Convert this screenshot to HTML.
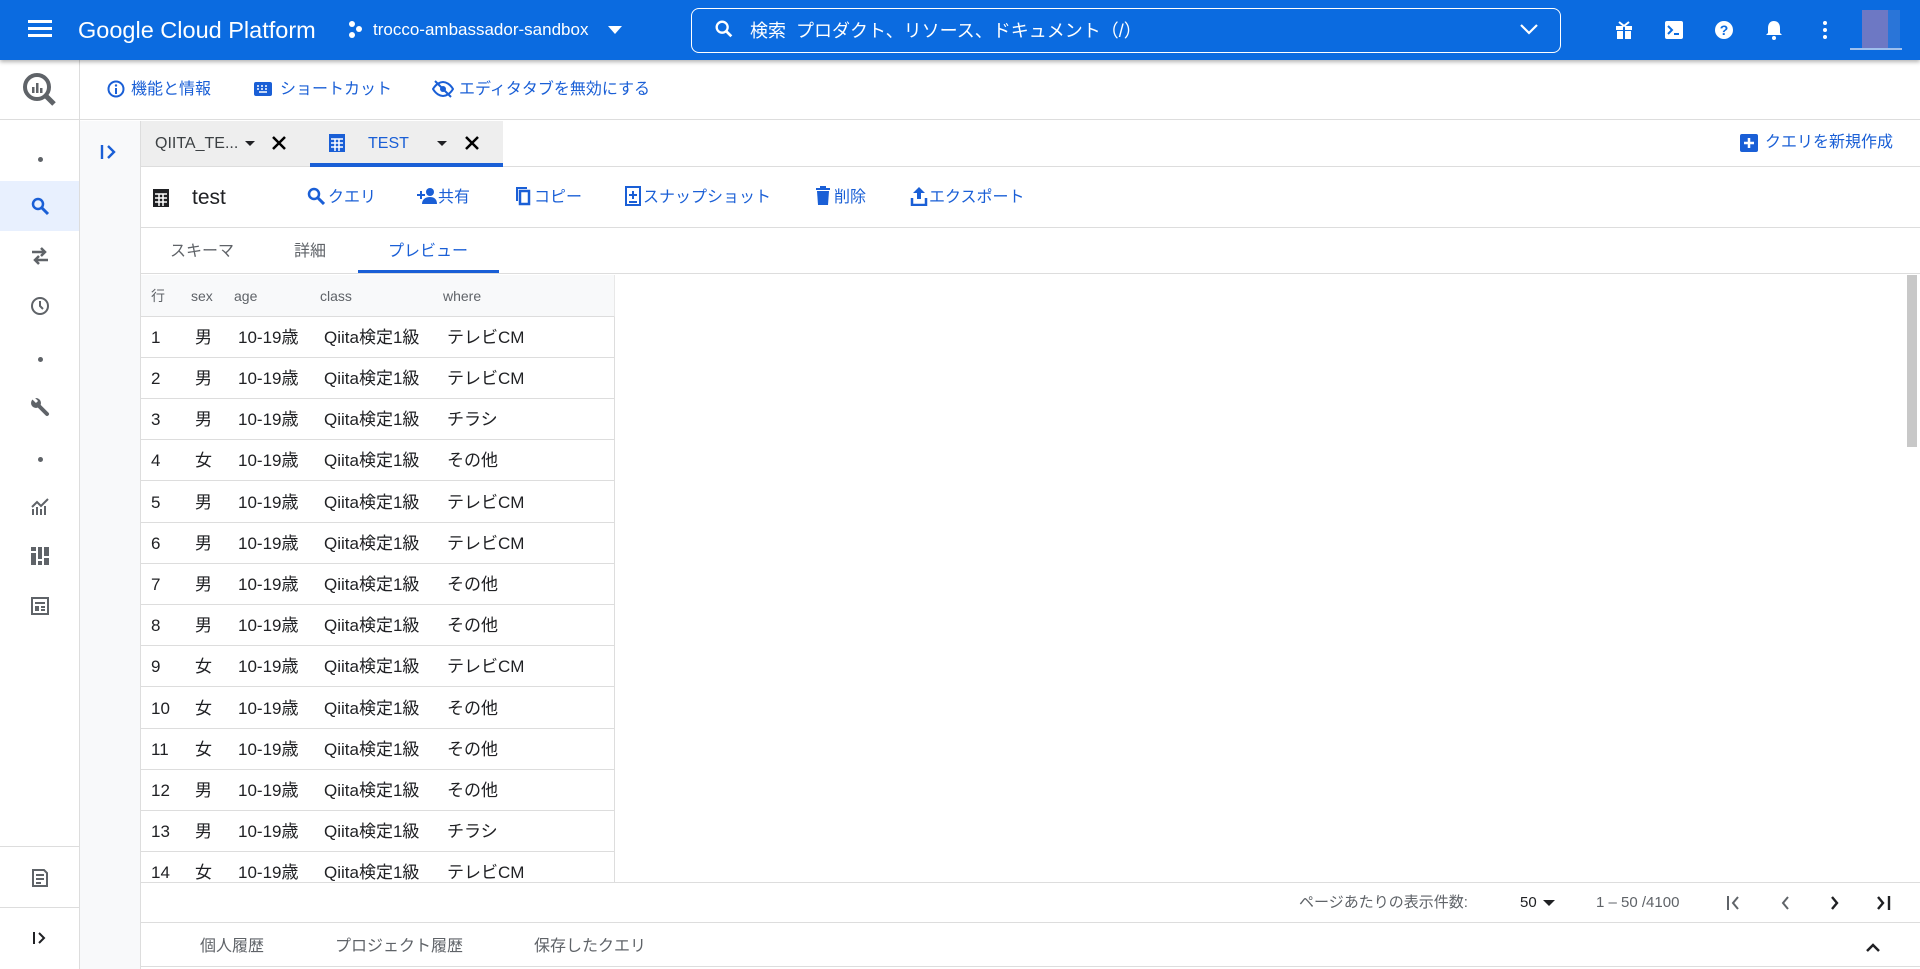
<!DOCTYPE html>
<html><head><meta charset="utf-8"><style>
*{box-sizing:border-box;margin:0;padding:0}
body{width:1920px;height:969px;overflow:hidden;font-family:"Liberation Sans","Noto Sans CJK JP",sans-serif;background:#fff;position:relative;color:#202124}
.abs{position:absolute}
.hdr{left:0;top:0;width:1920px;height:60px;background:#0b6be0;box-shadow:0 2px 4px rgba(0,0,0,.3);z-index:5;color:#fff}
.blue{color:#1a5fd6}
.sb{left:0;top:120px;width:80px;height:849px;border-right:1px solid #ddd;background:#fff}
.row{position:absolute;left:141px;width:474px;height:41px;border-bottom:1px solid #ddd;font-size:17px}
.row span{position:absolute;top:11px;line-height:20px;height:20px}
</style></head><body>
<div class="abs hdr">
  <div class="abs" style="left:28px;top:20px;width:24px;height:3px;background:#fff;box-shadow:0 7px 0 #fff,0 14px 0 #fff"></div>
  <div class="abs" style="left:78px;top:16px;font-size:23.5px;line-height:28px">Google Cloud Platform</div>
  <svg class="abs" style="left:347px;top:20px" width="16" height="20" viewBox="0 0 16 20"><circle cx="5" cy="4" r="3" fill="#fff"/><circle cx="12" cy="9" r="3" fill="#fff"/><circle cx="5" cy="15" r="3" fill="#fff"/></svg>
  <div class="abs" style="left:373px;top:20px;font-size:17px;line-height:20px">trocco-ambassador-sandbox</div>
  <div class="abs" style="left:608px;top:26px;border-left:7px solid transparent;border-right:7px solid transparent;border-top:8px solid #fff"></div>
  <div class="abs" style="left:691px;top:8px;width:870px;height:45px;border:1.5px solid #fff;border-radius:8px"></div>
  <svg class="abs" style="left:713px;top:18px" width="22" height="22" viewBox="0 0 24 24"><circle cx="10" cy="10" r="6" stroke="#fff" stroke-width="2.5" fill="none"/><path d="M14 14l6 6" stroke="#fff" stroke-width="3"/></svg>
  <div class="abs" style="left:750px;top:19px;font-size:18px;line-height:24px">検索&nbsp;&nbsp;プロダクト、リソース、ドキュメント（/）</div>
  <svg class="abs" style="left:1518px;top:21px" width="22" height="16" viewBox="0 0 22 16"><path d="M3 4l8 8 8-8" stroke="#fff" stroke-width="2.2" fill="none"/></svg>
  <svg class="abs" style="left:1614px;top:20px" width="20" height="20" viewBox="0 0 20 20"><rect x="2" y="6" width="16" height="4" fill="#fff"/><rect x="3" y="11" width="14" height="8" fill="#fff"/><rect x="9" y="6" width="2" height="13" fill="#0b6be0"/><path d="M5 2l5 4 5-4" stroke="#fff" stroke-width="2" fill="none"/></svg>
  <svg class="abs" style="left:1664px;top:20px" width="20" height="20" viewBox="0 0 20 20"><rect x="1" y="1" width="18" height="18" rx="2" fill="#fff"/><path d="M4 6l4 4-4 4" stroke="#0b6be0" stroke-width="2" fill="none"/><rect x="10" y="13" width="5" height="2" fill="#0b6be0"/></svg>
  <svg class="abs" style="left:1714px;top:20px" width="20" height="20" viewBox="0 0 20 20"><circle cx="10" cy="10" r="9" fill="#fff"/><text x="10" y="15" font-size="14" font-weight="bold" text-anchor="middle" fill="#0b6be0" font-family="Liberation Sans">?</text></svg>
  <svg class="abs" style="left:1764px;top:19px" width="20" height="22" viewBox="0 0 20 22"><path d="M10 2c-4 0-6 3-6 7v5l-2 2h16l-2-2V9c0-4-2-7-6-7z" fill="#fff"/><circle cx="10" cy="19" r="2" fill="#fff"/></svg>
  <div class="abs" style="left:1823px;top:21px;width:4px;height:4px;border-radius:2px;background:#fff;box-shadow:0 7px 0 #fff,0 14px 0 #fff"></div>
  <div class="abs" style="left:1862px;top:10px;width:26px;height:38px;background:#6d78c4"></div>
  <div class="abs" style="left:1888px;top:10px;width:12px;height:38px;background:#2a75d8"></div>
  <div class="abs" style="left:1850px;top:48px;width:52px;height:2px;background:#9fc0ee"></div>
</div>
<div class="abs" style="left:0;top:60px;width:1920px;height:60px;border-bottom:1px solid #ddd"></div>
<div class="abs" style="left:0;top:60px;width:80px;height:60px;border-right:1px solid #ddd"></div>
<svg class="abs" style="left:21px;top:71px" width="38" height="38" viewBox="0 0 38 38"><circle cx="16" cy="16" r="12" stroke="#5f6368" stroke-width="4" fill="none"/><path d="M24 24l9 9" stroke="#5f6368" stroke-width="5"/><rect x="11" y="16" width="2.5" height="6" fill="#5f6368"/><rect x="15" y="12" width="2.5" height="10" fill="#5f6368"/><rect x="19" y="17" width="2.5" height="5" fill="#5f6368"/></svg>
<svg class="abs" style="left:107px;top:80px" width="18" height="18" viewBox="0 0 18 18"><circle cx="9" cy="9" r="7.5" stroke="#1a5fd6" stroke-width="2" fill="none"/><rect x="8" y="8" width="2" height="6" fill="#1a5fd6"/><circle cx="9" cy="5.5" r="1.2" fill="#1a5fd6"/></svg>
<div class="abs blue" style="left:131px;top:79px;font-size:16px;line-height:22px">機能と情報</div>
<svg class="abs" style="left:254px;top:82px" width="18" height="14" viewBox="0 0 18 14"><rect x="0" y="0" width="18" height="14" rx="2" fill="#1a5fd6"/><path d="M3 4h2M7 4h2M11 4h2M3 7h2M7 7h2M11 7h2M5 10h8" stroke="#fff" stroke-width="1.5"/></svg>
<div class="abs blue" style="left:280px;top:79px;font-size:16px;line-height:22px">ショートカット</div>
<svg class="abs" style="left:432px;top:80px" width="22" height="18" viewBox="0 0 22 18"><path d="M1 9c3-5 7-7 10-7s7 2 10 7c-3 5-7 7-10 7S4 14 1 9z" stroke="#1a5fd6" stroke-width="2" fill="none"/><circle cx="11" cy="9" r="3" fill="#1a5fd6"/><path d="M3 1l16 16" stroke="#1a5fd6" stroke-width="2"/></svg>
<div class="abs blue" style="left:459px;top:79px;font-size:16px;line-height:22px">エディタタブを無効にする</div>
<div class="abs sb"></div>
<div class="abs" style="left:0;top:181px;width:79px;height:50px;background:#e8f0fe"></div>
<div class="abs" style="left:38px;top:157px;width:5px;height:5px;border-radius:3px;background:#5f6368"></div>
<svg class="abs" style="left:30px;top:196px" width="20" height="20" viewBox="0 0 20 20"><circle cx="8" cy="8" r="5" stroke="#1a5fd6" stroke-width="2.5" fill="none"/><path d="M12 12l6 6" stroke="#1a5fd6" stroke-width="3"/></svg>
<svg class="abs" style="left:30px;top:246px" width="20" height="20" viewBox="0 0 20 20"><path d="M2 6h13M11 2l4 4-4 4M18 14H5M9 10l-4 4 4 4" stroke="#5f6368" stroke-width="2.5" fill="none"/></svg>
<svg class="abs" style="left:30px;top:296px" width="20" height="20" viewBox="0 0 20 20"><circle cx="10" cy="10" r="8" stroke="#5f6368" stroke-width="2" fill="none"/><path d="M10 5v5l3 3" stroke="#5f6368" stroke-width="2" fill="none"/></svg>
<div class="abs" style="left:38px;top:357px;width:5px;height:5px;border-radius:3px;background:#5f6368"></div>
<svg class="abs" style="left:30px;top:397px" width="20" height="20" viewBox="0 0 20 20"><path d="M8 8l9 9" stroke="#5f6368" stroke-width="4" stroke-linecap="round"/><circle cx="6" cy="6" r="5" fill="#5f6368"/><path d="M3 1l4 4" stroke="#fff" stroke-width="3"/></svg>
<div class="abs" style="left:38px;top:457px;width:5px;height:5px;border-radius:3px;background:#5f6368"></div>
<svg class="abs" style="left:30px;top:497px" width="20" height="20" viewBox="0 0 20 20"><path d="M2 18V12h2v6zM6 18V10h2v8zM10 18V12h2v6zM14 18V9h2v9z" fill="#5f6368"/><path d="M2 10l5-5 4 4 7-7" stroke="#5f6368" stroke-width="2" fill="none"/></svg>
<svg class="abs" style="left:30px;top:546px" width="20" height="20" viewBox="0 0 20 20"><path d="M1 1h5v4H1zM1 7h5v12H1zM8 1h4v12H8zM8 15h4v4H8zM14 1h5v9h-5zM14 12h5v7h-5z" fill="#5f6368"/></svg>
<svg class="abs" style="left:30px;top:596px" width="20" height="20" viewBox="0 0 20 20"><rect x="2" y="2" width="16" height="16" stroke="#5f6368" stroke-width="2" fill="none"/><path d="M5 6h10v2H5zM5 10h4v5H5zM11 10h4v2h-4zM11 13h4v2h-4z" fill="#5f6368"/></svg>
<div class="abs" style="left:0;top:846px;width:79px;height:1px;background:#ddd"></div>
<div class="abs" style="left:0;top:907px;width:79px;height:1px;background:#ddd"></div>
<svg class="abs" style="left:30px;top:868px" width="20" height="20" viewBox="0 0 20 20"><path d="M3 2h11l3 3v13H3z" stroke="#5f6368" stroke-width="2" fill="none"/><path d="M6 7h8M6 11h8M6 15h5" stroke="#5f6368" stroke-width="2"/></svg>
<svg class="abs" style="left:32px;top:930px" width="16" height="16" viewBox="0 0 16 16"><path d="M2 2v12" stroke="#202124" stroke-width="2"/><path d="M7 3l5 5-5 5" stroke="#202124" stroke-width="2" fill="none"/></svg>
<div class="abs" style="left:80px;top:121px;width:61px;height:848px;background:#f8f9fa;border-right:1px solid #ddd"></div>
<svg class="abs" style="left:99px;top:143px" width="20" height="18" viewBox="0 0 20 18"><path d="M3 2v14" stroke="#1a5fd6" stroke-width="2.4"/><path d="M9 3l6 6-6 6" stroke="#1a5fd6" stroke-width="2.4" fill="none"/></svg>
<div class="abs" style="left:141px;top:121px;width:362px;height:46px;background:#eeeeee"></div>
<div class="abs" style="left:141px;top:166px;width:1779px;height:1px;background:#ddd"></div>
<div class="abs" style="left:310px;top:163px;width:193px;height:4px;background:#1a5fd6"></div>
<div class="abs" style="left:155px;top:134px;font-size:16px;line-height:20px;color:#3c4043">QIITA_TE...</div>
<div class="abs" style="left:245px;top:141px;border-left:5px solid transparent;border-right:5px solid transparent;border-top:5px solid #202124"></div>
<svg class="abs" style="left:271px;top:135px" width="16" height="16" viewBox="0 0 16 16"><path d="M2 2l12 12M14 2L2 14" stroke="#000" stroke-width="2.5"/></svg>
<svg class="abs" style="left:328px;top:133px" width="18" height="20" viewBox="0 0 18 20"><rect x="1" y="1" width="16" height="18" fill="#1a5fd6"/><path d="M3 6h12M3 10h12M3 14h12M7 6v12M11 6v12" stroke="#fff" stroke-width="1.5"/></svg>
<div class="abs blue" style="left:368px;top:134px;font-size:16px;line-height:20px">TEST</div>
<div class="abs" style="left:437px;top:141px;border-left:5px solid transparent;border-right:5px solid transparent;border-top:5px solid #202124"></div>
<svg class="abs" style="left:464px;top:135px" width="16" height="16" viewBox="0 0 16 16"><path d="M2 2l12 12M14 2L2 14" stroke="#000" stroke-width="2.5"/></svg>
<svg class="abs" style="left:1740px;top:134px" width="18" height="18" viewBox="0 0 18 18"><rect x="0" y="0" width="18" height="18" rx="2" fill="#1a5fd6"/><path d="M9 4v10M4 9h10" stroke="#fff" stroke-width="2.5"/></svg>
<div class="abs blue" style="left:1765px;top:132px;font-size:16px;line-height:22px">クエリを新規作成</div>
<svg class="abs" style="left:152px;top:188px" width="18" height="20" viewBox="0 0 18 20"><rect x="1" y="1" width="16" height="18" fill="#202124"/><path d="M3 6h12M3 10h12M3 14h12M7 6v12M11 6v12" stroke="#fff" stroke-width="1.5"/></svg>
<div class="abs" style="left:192px;top:186px;font-size:21px;line-height:24px">test</div>
<div class="abs" style="left:141px;top:227px;width:1779px;height:1px;background:#ddd"></div>
<svg class="abs" style="left:307px;top:187px" width="18" height="18" viewBox="0 0 18 18"><circle cx="7" cy="7" r="5" stroke="#1a5fd6" stroke-width="2.5" fill="none"/><path d="M11 11l6 6" stroke="#1a5fd6" stroke-width="3"/></svg>
<div class="abs blue" style="left:328px;top:187px;font-size:16px;line-height:22px">クエリ</div>
<svg class="abs" style="left:417px;top:187px" width="20" height="18" viewBox="0 0 20 18"><circle cx="13" cy="5" r="4" fill="#1a5fd6"/><path d="M5 17c0-5 4-7 8-7s7 2 7 7z" fill="#1a5fd6"/><path d="M4 4v8M0 8h8" stroke="#1a5fd6" stroke-width="2"/></svg>
<div class="abs blue" style="left:438px;top:187px;font-size:16px;line-height:22px">共有</div>
<svg class="abs" style="left:515px;top:186px" width="16" height="20" viewBox="0 0 16 20"><path d="M2 15V2h10" stroke="#1a5fd6" stroke-width="2" fill="none"/><rect x="5" y="5" width="9" height="13" stroke="#1a5fd6" stroke-width="2.5" fill="none"/></svg>
<div class="abs blue" style="left:534px;top:187px;font-size:16px;line-height:22px">コピー</div>
<svg class="abs" style="left:625px;top:186px" width="16" height="20" viewBox="0 0 16 20"><rect x="1" y="1" width="14" height="18" stroke="#1a5fd6" stroke-width="2" fill="none"/><path d="M8 5v8M4 9h8" stroke="#1a5fd6" stroke-width="2"/><path d="M4 16h8" stroke="#1a5fd6" stroke-width="2"/></svg>
<div class="abs blue" style="left:643px;top:187px;font-size:16px;line-height:22px">スナップショット</div>
<svg class="abs" style="left:815px;top:186px" width="16" height="20" viewBox="0 0 16 20"><rect x="1" y="2" width="14" height="2" fill="#1a5fd6"/><rect x="5" y="0" width="6" height="3" fill="#1a5fd6"/><path d="M2 5h12l-1 14H3z" fill="#1a5fd6"/></svg>
<div class="abs blue" style="left:834px;top:187px;font-size:16px;line-height:22px">削除</div>
<svg class="abs" style="left:910px;top:186px" width="18" height="20" viewBox="0 0 18 20"><path d="M9 1L3 7h4v6h4V7h4z" fill="#1a5fd6"/><path d="M2 12v7h14v-7" stroke="#1a5fd6" stroke-width="2.5" fill="none"/></svg>
<div class="abs blue" style="left:929px;top:187px;font-size:16px;line-height:22px">エクスポート</div>
<div class="abs" style="left:170px;top:241px;font-size:16px;line-height:22px;color:#5f6368">スキーマ</div>
<div class="abs" style="left:294px;top:241px;font-size:16px;line-height:22px;color:#5f6368">詳細</div>
<div class="abs blue" style="left:388px;top:241px;font-size:16px;line-height:22px">プレビュー</div>
<div class="abs" style="left:358px;top:270px;width:141px;height:3px;background:#1a5fd6"></div>
<div class="abs" style="left:141px;top:273px;width:1779px;height:1px;background:#ddd"></div>
<div class="abs" style="left:141px;top:275px;width:474px;height:42px;background:#f8f9fa;border-bottom:1px solid #ddd;border-right:1px solid #e8e8e8;font-size:14px;color:#5f6368">
<span class="abs" style="left:10px;top:12px;line-height:18px">行</span><span class="abs" style="left:50px;top:12px;line-height:18px">sex</span><span class="abs" style="left:93px;top:12px;line-height:18px">age</span><span class="abs" style="left:179px;top:12px;line-height:18px">class</span><span class="abs" style="left:302px;top:12px;line-height:18px">where</span></div>
<div class="abs" style="left:614px;top:317px;width:1px;height:565px;background:#ddd"></div>
<div class="abs" style="left:1907px;top:275px;width:10px;height:172px;background:#c8c8c8"></div>
<div class="abs" style="left:141px;top:882px;width:1779px;height:1px;background:#ddd;z-index:2"></div>
<div class="abs" style="left:141px;top:883px;width:1779px;height:40px;background:#fff;z-index:2;border-bottom:1px solid #ddd"></div>
<div class="abs" style="left:1299px;top:893px;font-size:15px;line-height:20px;color:#5f6368;z-index:3">ページあたりの表示件数:</div>
<div class="abs" style="left:1520px;top:893px;font-size:15px;line-height:20px;z-index:3">50</div>
<div class="abs" style="left:1543px;top:900px;border-left:6px solid transparent;border-right:6px solid transparent;border-top:6px solid #202124;z-index:3"></div>
<div class="abs" style="left:1596px;top:893px;font-size:15px;line-height:20px;color:#5f6368;z-index:3">1 – 50 /4100</div>
<svg class="abs" style="left:1725px;top:894px;z-index:3" width="18" height="18" viewBox="0 0 18 18"><path d="M3 2v14" stroke="#5f6368" stroke-width="2"/><path d="M13 3L8 9l5 6" stroke="#5f6368" stroke-width="2" fill="none"/></svg>
<svg class="abs" style="left:1776px;top:894px;z-index:3" width="18" height="18" viewBox="0 0 18 18"><path d="M12 3L7 9l5 6" stroke="#5f6368" stroke-width="2" fill="none"/></svg>
<svg class="abs" style="left:1826px;top:894px;z-index:3" width="18" height="18" viewBox="0 0 18 18"><path d="M6 3l5 6-5 6" stroke="#202124" stroke-width="2.4" fill="none"/></svg>
<svg class="abs" style="left:1875px;top:894px;z-index:3" width="18" height="18" viewBox="0 0 18 18"><path d="M3 3l5 6-5 6" stroke="#202124" stroke-width="2.4" fill="none"/><path d="M14 2v14" stroke="#202124" stroke-width="2.4"/></svg>
<div class="abs" style="left:200px;top:936px;font-size:16px;line-height:22px;color:#5f6368">個人履歴</div>
<div class="abs" style="left:335px;top:936px;font-size:16px;line-height:22px;color:#5f6368">プロジェクト履歴</div>
<div class="abs" style="left:534px;top:936px;font-size:16px;line-height:22px;color:#5f6368">保存したクエリ</div>
<svg class="abs" style="left:1865px;top:941px" width="16" height="12" viewBox="0 0 16 12"><path d="M2 10l6-6 6 6" stroke="#202124" stroke-width="2.5" fill="none"/></svg>
<div class="abs" style="left:141px;top:966px;width:1779px;height:1px;background:#ddd"></div>
<div class="row" style="top:317px"><span style="left:10px">1</span><span style="left:54px">男</span><span style="left:97px">10-19歳</span><span style="left:183px">Qiita検定1級</span><span style="left:306px">テレビCM</span></div>
<div class="row" style="top:358px"><span style="left:10px">2</span><span style="left:54px">男</span><span style="left:97px">10-19歳</span><span style="left:183px">Qiita検定1級</span><span style="left:306px">テレビCM</span></div>
<div class="row" style="top:399px"><span style="left:10px">3</span><span style="left:54px">男</span><span style="left:97px">10-19歳</span><span style="left:183px">Qiita検定1級</span><span style="left:306px">チラシ</span></div>
<div class="row" style="top:440px"><span style="left:10px">4</span><span style="left:54px">女</span><span style="left:97px">10-19歳</span><span style="left:183px">Qiita検定1級</span><span style="left:306px">その他</span></div>
<div class="row" style="top:482px"><span style="left:10px">5</span><span style="left:54px">男</span><span style="left:97px">10-19歳</span><span style="left:183px">Qiita検定1級</span><span style="left:306px">テレビCM</span></div>
<div class="row" style="top:523px"><span style="left:10px">6</span><span style="left:54px">男</span><span style="left:97px">10-19歳</span><span style="left:183px">Qiita検定1級</span><span style="left:306px">テレビCM</span></div>
<div class="row" style="top:564px"><span style="left:10px">7</span><span style="left:54px">男</span><span style="left:97px">10-19歳</span><span style="left:183px">Qiita検定1級</span><span style="left:306px">その他</span></div>
<div class="row" style="top:605px"><span style="left:10px">8</span><span style="left:54px">男</span><span style="left:97px">10-19歳</span><span style="left:183px">Qiita検定1級</span><span style="left:306px">その他</span></div>
<div class="row" style="top:646px"><span style="left:10px">9</span><span style="left:54px">女</span><span style="left:97px">10-19歳</span><span style="left:183px">Qiita検定1級</span><span style="left:306px">テレビCM</span></div>
<div class="row" style="top:688px"><span style="left:10px">10</span><span style="left:54px">女</span><span style="left:97px">10-19歳</span><span style="left:183px">Qiita検定1級</span><span style="left:306px">その他</span></div>
<div class="row" style="top:729px"><span style="left:10px">11</span><span style="left:54px">女</span><span style="left:97px">10-19歳</span><span style="left:183px">Qiita検定1級</span><span style="left:306px">その他</span></div>
<div class="row" style="top:770px"><span style="left:10px">12</span><span style="left:54px">男</span><span style="left:97px">10-19歳</span><span style="left:183px">Qiita検定1級</span><span style="left:306px">その他</span></div>
<div class="row" style="top:811px"><span style="left:10px">13</span><span style="left:54px">男</span><span style="left:97px">10-19歳</span><span style="left:183px">Qiita検定1級</span><span style="left:306px">チラシ</span></div>
<div class="row" style="top:852px"><span style="left:10px">14</span><span style="left:54px">女</span><span style="left:97px">10-19歳</span><span style="left:183px">Qiita検定1級</span><span style="left:306px">テレビCM</span></div>
</body></html>
